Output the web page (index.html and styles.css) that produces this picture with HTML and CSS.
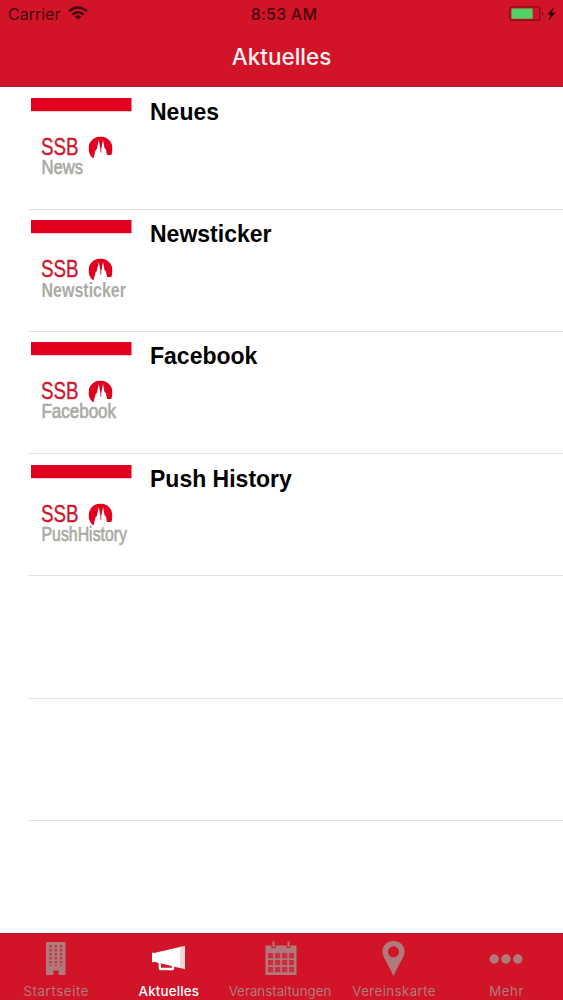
FILE: index.html
```html
<!DOCTYPE html>
<html lang="de">
<head>
    <meta charset="UTF-8" />
    <meta name="viewport" content="width=device-width, initial-scale=1.0" />
    <title>Aktuelles</title>
    <link rel="stylesheet" href="styles.css">
</head>
<body>
    <svg class="defs" width="0" height="0">
        <symbol id="church" viewBox="0 0 24 22">
            <path fill="#e2001f" d="M5 22C1.5 19.5 0 15.5 0 12A12 12 0 0 1 24 12C24 14.5 23.5 16.5 22.8 18.500H18.5L17.500 13L16 11.500L14.500 3.5L12.8 12.500V16H11.900V12.5L10.3 3.5L8.300 12.500L7 14Z" />
        </symbol>
    </svg>

    <header class="header">
        <div class="status-bar">
            <div class="carrier">
                <span>Carrier</span>
                <svg width="20" height="14" viewBox="0 0 20 14" fill="none" stroke="#450610" stroke-width="2.6">
                    <path d="M1.2 5.1Q10 -2.1 18.8 5.1" />
                    <path d="M4.4 8.6Q10 3.9 15.6 8.6" />
                    <path fill="#450610" stroke="none" d="M6.8 10.6Q10 8 13.2 10.6L10 13.6Z" />
                </svg>
            </div>
            <div class="time">8:53 AM</div>
            <div class="battery">
                <svg width="48" height="16" viewBox="0 0 48 16">
                    <rect x=".9" y=".9" width="30" height="13.4" rx="2.5" fill="none" stroke="#8c0d19" stroke-width="1.4" />
                    <rect x="2.4" y="2.4" width="21.2" height="10.3" rx=".8" fill="#52d264" />
                    <path fill="#8c0d19" d="M33 5.2Q36 7.6 33 10Z" />
                    <path fill="#28040a" d="M44.8 1L38.5 8.4H41.7L39.8 14.4L46.4 6.6H42.9Z" />
                </svg>
            </div>
        </div>
        <h1 class="title">Aktuelles</h1>
    </header>

    <main class="list">
        <div class="row">
            <svg class="thumb" width="101" height="100" viewBox="0 0 101 100">
                <rect width="100.5" height="13.2" fill="#e2001f" />
                <text class="logo" x="10" y="57" textLength="37.5" lengthAdjust="spacingAndGlyphs">SSB</text>
                <use href="#church" x="57.5" y="38.5" width="24" height="22" />
                <text class="logo-sub light" x="10.5" y="75.5" textLength="41.5" lengthAdjust="spacingAndGlyphs">News</text>
            </svg>
            <h2>Neues</h2>
        </div>
        <div class="row">
            <svg class="thumb" width="101" height="100" viewBox="0 0 101 100">
                <rect width="100.5" height="13.2" fill="#e2001f" />
                <text class="logo" x="10" y="57" textLength="37.5" lengthAdjust="spacingAndGlyphs">SSB</text>
                <use href="#church" x="57.5" y="38.5" width="24" height="22" />
                <text class="logo-sub" x="10.5" y="77" textLength="84.5" lengthAdjust="spacingAndGlyphs">Newsticker</text>
            </svg>
            <h2>Newsticker</h2>
        </div>
        <div class="row">
            <svg class="thumb" width="101" height="100" viewBox="0 0 101 100">
                <rect width="100.5" height="13.2" fill="#e2001f" />
                <text class="logo" x="10" y="57" textLength="37.5" lengthAdjust="spacingAndGlyphs">SSB</text>
                <use href="#church" x="57.5" y="38.5" width="24" height="22" />
                <text class="logo-sub light" x="10.5" y="76" textLength="74.5" lengthAdjust="spacingAndGlyphs">Facebook</text>
            </svg>
            <h2>Facebook</h2>
        </div>
        <div class="row">
            <svg class="thumb" width="101" height="100" viewBox="0 0 101 100">
                <rect width="100.5" height="13.2" fill="#e2001f" />
                <text class="logo" x="10" y="57" textLength="37.5" lengthAdjust="spacingAndGlyphs">SSB</text>
                <use href="#church" x="57.5" y="38.5" width="24" height="22" />
                <text class="logo-sub light" x="10.5" y="75.5" textLength="85.5" lengthAdjust="spacingAndGlyphs">PushHistory</text>
            </svg>
            <h2>Push History</h2>
        </div>
        <div class="row"></div>
        <div class="row"></div>
    </main>

    <nav class="tab-bar">
        <a class="tab tab-start">
            <svg width="36" height="36" viewBox="0 0 36 36">
                <path fill="currentColor" d="M8 1H27.5V34H20.5V29.5H15.5V34H8Z" />
                <path stroke="#c43b48" stroke-width="2.6" stroke-dasharray="2.4 1.6" d="M12.5 4V25M17.8 4V25M23 4V25" />
            </svg>
            <span>Startseite</span>
        </a>
        <a class="tab tab-news active">
            <svg width="36" height="36" viewBox="0 0 36 36">
                <path fill="currentColor" d="M1 11.5L3 12L29 6V27L3 20.8L1 21.5Z" />
                <path fill="#f8d5d9" d="M29 5.8L34 5V28.2L29 27Z" />
                <path fill="none" stroke="currentColor" stroke-width="2.3" stroke-linejoin="round" d="M8.5 20.5L9 28H22V23" />
            </svg>
            <span>Aktuelles</span>
        </a>
        <a class="tab tab-events">
            <svg width="36" height="36" viewBox="0 0 36 36">
                <path fill="currentColor" d="M2.5 4.5H33.5V34H2.5Z" />
                <path fill="#c8303f" d="M5 12h5.3v5.3H5zM12 12h5.3v5.3H12zM19 12h5.3v5.3H19zM26 12h5v5.3h-5zM5 19h5.3v5.3H5zM12 19h5.3v5.3H12zM19 19h5.3v5.3H19zM26 19h5v5.3h-5zM5 26h5.3v5.3H5zM12 26h5.3v5.3H12zM19 26h5.3v5.3H19zM26 26h5v5.3h-5z" />
                <path stroke="#d21428" stroke-width="4" d="M10.5 1V7M25.5 1V7" />
                <path stroke="currentColor" stroke-width="2" d="M10.5 .5V6M25.5 .5V6" />
            </svg>
            <span>Veranstaltungen</span>
        </a>
        <a class="tab tab-map">
            <svg width="36" height="36" viewBox="0 0 36 36">
                <path fill="currentColor" fill-rule="evenodd" d="M17.5 0C11 0 6.5 4.5 6.5 10.5C6.5 16 10.5 20 17.5 35C24.5 20 28.5 16 28.5 10.5C28.5 4.5 24 0 17.5 0ZM17.5 5.3A5.5 5.5 0 1 1 17.5 16.3A5.5 5.5 0 1 1 17.5 5.3Z" />
            </svg>
            <span>Vereinskarte</span>
        </a>
        <a class="tab tab-more">
            <svg width="36" height="36" viewBox="0 0 36 36" fill="currentColor">
                <circle cx="5.2" cy="18" r="4.7" />
                <circle cx="17" cy="18" r="4.7" />
                <circle cx="28.8" cy="18" r="4.7" />
            </svg>
            <span>Mehr</span>
        </a>
    </nav>
</body>
</html>
```
FILE: styles.css
```css
* {
    box-sizing: border-box;
}

body {
    margin: 0;
    height: 1000px;
    display: flex;
    flex-direction: column;
    overflow: hidden;
    background-color: #fff;
    font-family: Inter, "Liberation Sans", sans-serif;
}

.defs {
    display: none;
}

.header {
    height: 87px;
    background-color: #d21428;
    border-bottom: 1px solid #b51a2b;
}

.status-bar {
    display: grid;
    grid-template-columns: 1fr auto 1fr;
    align-items: center;
    height: 28px;
    padding: 0 6px 0 8px;
    color: #450610;
    font-size: 16px;
}

.carrier {
    display: flex;
    align-items: center;
    gap: 8px;
}

.carrier svg {
    margin-top: -2px;
}

.time {
    padding-left: 3px;
    font-weight: 500;
    letter-spacing: 0.2px;
}

.battery {
    display: flex;
    justify-content: flex-end;
}

.title {
    margin: 0;
    color: #fff0f1;
    font-size: 22.5px;
    font-weight: 500;
    line-height: 58px;
    text-align: center;
}

/* Liste */
.list {
    flex: 1;
    padding: 0.6px 0 0 28px;
}

.row {
    display: flex;
    height: 122.2px;
    padding: 10.5px 0 0 3px;
    border-bottom: 1px solid #e1e1e1;
}

.thumb {
    flex: none;
    overflow: visible;
}

.row h2 {
    margin: 0 0 0 18px;
    font-family: "Liberation Sans", Arial, sans-serif;
    font-size: 23px;
    line-height: 28px;
    color: #000;
}

.logo {
    font-family: "Liberation Sans Narrow", "Liberation Sans", Arial, sans-serif;
    font-size: 24px;
    fill: #d0172b;
    stroke: #d0172b;
    stroke-width: 0.4px;
}

.logo-sub {
    font-family: "Liberation Sans Narrow", "Liberation Sans", Arial, sans-serif;
    font-size: 20px;
    font-weight: bold;
    fill: #aaaba5;
}

.light {
    font-weight: normal;
    stroke: #aaaba5;
    stroke-width: 0.7px;
}

/* Tab-Leiste */
.tab-bar {
    display: grid;
    grid-template-columns: repeat(5, 1fr);
    height: 67px;
    background-color: #d21428;
    border-top: 1px solid #b51a2b;
}

.tab {
    display: flex;
    flex-direction: column;
    align-items: center;
    padding-top: 7px;
    color: #b07a7c;
    font-size: 13.3px;
    letter-spacing: 0.2px;
    white-space: nowrap;
}

.tab span {
    margin-top: 5px;
    line-height: 18px;
}

.tab-start {
    letter-spacing: 0.6px;
}

.tab-events {
    letter-spacing: 0;
}

.tab-events span {
    margin-left: -3px;
}

.tab-map {
    letter-spacing: 0.4px;
}

.tab-more {
    letter-spacing: 0.5px;
}

.active {
    color: #fff;
    font-weight: 500;
}
```
